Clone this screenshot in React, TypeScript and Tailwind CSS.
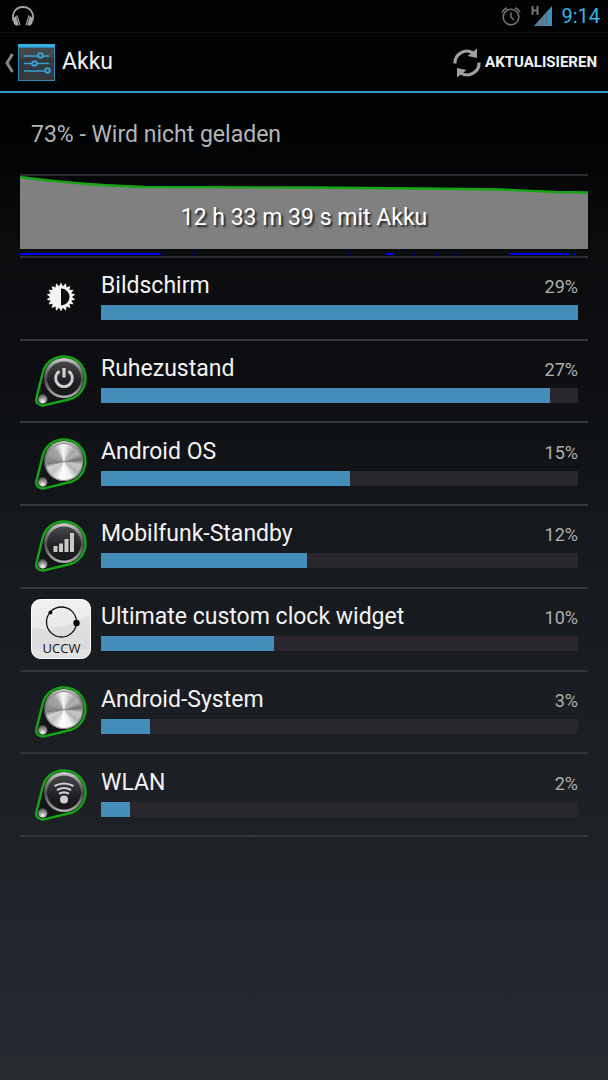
import { useId, type ReactNode } from 'react';

type IconName = 'display' | 'idle' | 'system' | 'cell' | 'uccw' | 'wifi';

interface Usage {
  name: string;
  percent: number;
  bar: number;
  icon: IconName;
}

const usages: Usage[] = [
  { name: 'Bildschirm', percent: 29, bar: 100, icon: 'display' },
  { name: 'Ruhezustand', percent: 27, bar: 94.2, icon: 'idle' },
  { name: 'Android OS', percent: 15, bar: 52.2, icon: 'system' },
  { name: 'Mobilfunk-Standby', percent: 12, bar: 43.1, icon: 'cell' },
  { name: 'Ultimate custom clock widget', percent: 10, bar: 36.2, icon: 'uccw' },
  { name: 'Android-System', percent: 3, bar: 10.2, icon: 'system' },
  { name: 'WLAN', percent: 2, bar: 6.1, icon: 'wifi' },
];

// [start, width] of the phases with the screen on
const screenOn = [
  [0, 140], [142, 1], [174, 1], [213, 1], [328, 1], [345, 1], [366, 8],
  [394, 1], [416, 1], [436, 1], [489, 60], [554, 1], [567, 1],
];

function HeadphonesIcon() {
  return (
    <svg width="24" height="22" viewBox="0 0 24 22" fill="none" aria-hidden="true">
      <path d="M2.500 16C.5 9 4 2 12 2s11.500 7 9.500 14" stroke="#a3a3a3" strokeWidth="1.800" />
      <path d="M3 12.500 6.500 10l3 10-4 .5C2.500 20 1.500 16 3 12.500ZM21 12.500 17.500 10l-3 10 4 .5c3-.5 4-4.500 2.500-8Z" fill="#a8a8a8" />
      <path d="m5.500 11.500 2.500 9M18.500 11.500l-2.500 9" stroke="#444" />
    </svg>
  );
}

function AlarmIcon() {
  return (
    <svg width="20" height="20" viewBox="0 0 20 20" fill="none" stroke="#757575" aria-hidden="true">
      <circle cx="10" cy="11" r="7.800" strokeWidth="1.600" />
      <path d="M10 6.500V11l2.800 3" strokeWidth="1.500" />
      <path d="M1 6.500Q2.500 3 6 1.700M19 6.500Q17.500 3 14 1.700" strokeWidth="1.500" />
    </svg>
  );
}

function SignalIcon() {
  return (
    <svg width="22" height="22" viewBox="0 0 22 22" aria-hidden="true">
      <path d="M1.500 1v9M6.500 1v9M2 5.500h4.500" stroke="#777" strokeWidth="2" />
      <path d="M21 1v20H3Z" fill="#3d8fc0" />
      <path d="M7.500 16.500V21M11.500 12v9M15.500 7.500V21" stroke="#6c6a6c" strokeWidth="1.500" />
    </svg>
  );
}

function SettingsIcon() {
  return (
    <svg width="37" height="37" viewBox="0 0 37 37" aria-hidden="true">
      <rect width="37" height="37" fill="#2f86b5" />
      <rect x="1" y="4" width="35" height="32" fill="#34393d" />
      <rect x="1" y="4" width="35" height="10" fill="#44474a" />
      <rect width="37" height="3" fill="#35aee0" />
      <g stroke="#3a9fd0" strokeWidth="1.500" fill="#34393d">
        <path d="M6 12h25M6 19.500h25M6 27h25" />
        <circle cx="22.500" cy="11.500" r="2.300" strokeWidth="2" />
        <circle cx="16.500" cy="19.500" r="2.300" strokeWidth="2" />
        <circle cx="29.500" cy="26.500" r="2.300" strokeWidth="2" />
      </g>
    </svg>
  );
}

function RefreshIcon() {
  return (
    <svg width="28" height="30" viewBox="0 0 28 30" aria-hidden="true">
      <g fill="none" stroke="#a0a0a0" strokeWidth="3.200">
        <path d="M1.900 15.500A12 12 0 0 1 20 4.800" />
        <path d="M26.100 14.500A12 12 0 0 1 8 25.200" />
      </g>
      <path d="M24 .5V10L14.500 8ZM4 29.500V20l9.500 2Z" fill="#a0a0a0" />
    </svg>
  );
}

function DisplayIcon() {
  const points = Array.from({ length: 36 }, (_, i) => {
    const angle = (i * Math.PI) / 18;
    const radius = i % 2 === 0 ? 14.5 : 11;
    return `${30 + radius * Math.sin(angle)},${29 - radius * Math.cos(angle)}`;
  }).join(' ');

  return (
    <svg width="60" height="60" viewBox="0 0 60 60" aria-hidden="true">
      <polygon points={points} fill="#f2f2f2" />
      <path d="M30 20.500a8.500 8.500 0 0 1 0 17Z" fill="#0b0c0e" />
    </svg>
  );
}

function UccwIcon() {
  const id = useId();
  return (
    <svg width="60" height="60" viewBox="0 0 60 60" aria-hidden="true">
      <defs>
        <linearGradient id={id} x1="0" y1="0" x2="0" y2="1">
          <stop offset="0" stopColor="#f0f0f0" />
          <stop offset="1" stopColor="#e0e0e0" />
        </linearGradient>
      </defs>
      <rect x=".5" y=".5" width="59" height="59" rx="9" fill={`url(#${id})`} stroke="#fff" />
      <path d="M1 29Q36 32 59 16V50H1Z" fill="#d3d3d3" opacity=".5" />
      <circle cx="30.500" cy="23" r="15" fill="none" stroke="#111" strokeWidth="1.300" />
      <circle cx="19.500" cy="13.500" r="2" />
      <circle cx="45.500" cy="24" r="3.200" />
      <text x="30.500" y="54" textAnchor="middle" fontSize="13" fill="#111" className="font-['Open_Sans',sans-serif]">
        UCCW
      </text>
    </svg>
  );
}

function KnobIcon({ metal, children }: { metal?: boolean; children?: ReactNode }) {
  const id = useId();
  return (
    <span className="relative block size-[60px]">
      <svg width="60" height="60" viewBox="0 0 60 60" aria-hidden="true">
        <defs>
          <linearGradient id={`${id}rim`} x1="0" y1="0" x2="0" y2="1">
            <stop offset="0" stopColor="#d0d0d0" />
            <stop offset=".3" stopColor="#777" />
            <stop offset=".55" stopColor="#4b4b4e" />
            <stop offset="1" stopColor="#b4b4b4" />
          </linearGradient>
          <linearGradient id={`${id}face`} x1="0" y1="0" x2="0" y2="1">
            <stop offset="0" stopColor="#47474a" />
            <stop offset=".55" stopColor="#222226" />
            <stop offset="1" stopColor="#151518" />
          </linearGradient>
          <radialGradient id={`${id}ball`} cx=".5" cy=".75" r=".7">
            <stop offset="0" stopColor="#fff" />
            <stop offset=".5" stopColor="#9d9d9d" />
            <stop offset="1" stopColor="#555" />
          </radialGradient>
        </defs>
        <path
          d="M11.500 22.500C14 12 22.500 5.500 33 5.500c12.500 0 21.500 10 21.500 21.500 0 10-6 18-15 21L13 54.300C8.500 55.300 4.500 52 5.300 47.500Z"
          fill="#141517"
          stroke="#16a516"
          strokeWidth="2.400"
        />
        <circle cx="33" cy="27" r="20" fill={`url(#${id}rim)`} />
        <circle cx="33" cy="27.500" r="17" fill={`url(#${id}face)`} />
        <circle cx="11.700" cy="48" r="4.700" fill={`url(#${id}ball)`} />
        {children}
      </svg>
      {metal && (
        <span className="absolute top-[9px] left-[14px] size-[38px] rounded-full border border-[#8a8a8a] bg-[conic-gradient(#f2f2f2_0deg,#d8d8d8_15deg,#a8a8a8_38deg,#b0b0b0_60deg,#707070_82deg,#c8c8c8_100deg,#b4b4b4_130deg,#f0f0f0_155deg,#fff_190deg,#c4c4c4_225deg,#d2d2d2_250deg,#7c7c7c_264deg,#9c9c9c_295deg,#a4a4a4_325deg,#f2f2f2_350deg)]" />
      )}
    </span>
  );
}

function UsageIcon({ name }: { name: IconName }) {
  switch (name) {
    case 'display':
      return <DisplayIcon />;
    case 'uccw':
      return <UccwIcon />;
    case 'system':
      return <KnobIcon metal />;
    case 'idle':
      return (
        <KnobIcon>
          <path d="M28.500 20.300a8.300 8.300 0 1 0 9 0" fill="none" stroke="#d0d0d0" strokeWidth="2.800" />
          <path d="M33 17v9.500" stroke="#d0d0d0" strokeWidth="3.200" />
        </KnobIcon>
      );
    case 'cell':
      return (
        <KnobIcon>
          <path d="M24.500 36v-6M30 36v-8.500M35.500 36V23M41 36V17" stroke="#c8c8c8" strokeWidth="4" />
        </KnobIcon>
      );
    case 'wifi':
      return (
        <KnobIcon>
          <g fill="none" stroke="#d0d0d0" strokeWidth="2.200">
            <path d="M23.500 21q9.500-5 19 0M26 25q7-4 14 0M28 28.800q5-3 10 0" />
          </g>
          <circle cx="33" cy="34.500" r="4" fill="#cfcfcf" />
        </KnobIcon>
      );
  }
}

function BatteryChart() {
  return (
    <button type="button" className="relative block h-[84px] w-full border-y-2 border-[#2a2c2f]">
      <svg className="block h-full w-full" viewBox="0 0 568 80" preserveAspectRatio="none" aria-hidden="true">
        <path d="M0 1Q60 9 124 11L290 11.500 400 12.500 480 13.500 535 16 568 16.500V73H0Z" fill="#808080" />
        <path d="M0 1Q60 9 124 11L290 11.500 400 12.500 480 13.500 535 16 568 16.500" fill="none" stroke="#16a516" strokeWidth="2.400" />
        {screenOn.map(([start, width]) => (
          <rect key={start} x={start} y="77" width={width} height="2" fill="#0000f5" />
        ))}
      </svg>
      <span className="absolute inset-0 flex items-center justify-center pt-1 text-[23px] text-white [text-shadow:2px_2px_2px_#222]">
        12 h 33 m 39 s mit Akku
      </span>
    </button>
  );
}

function UsageRow({ usage }: { usage: Usage }) {
  return (
    <li className="flex items-center gap-[10px] border-b-2 border-[#343639] pr-[10px] pl-[11px]">
      <UsageIcon name={usage.icon} />
      <div className="min-w-0 flex-1 pb-[6px]">
        <div className="flex items-baseline justify-between">
          <span className="text-[23px] leading-8 text-[#f3f3f3]">{usage.name}</span>
          <span className="text-[18px] leading-8 text-[#b0b0b0]">{usage.percent}%</span>
        </div>
        <div
          role="progressbar"
          aria-label={usage.name}
          aria-valuenow={usage.percent}
          className="mt-[2px] h-[15px] bg-[#29262d]"
        >
          <div className="h-full bg-[#448cb9]" style={{ width: `${usage.bar}%` }} />
        </div>
      </div>
    </li>
  );
}

export default function App() {
  return (
    <div className="min-h-screen bg-[linear-gradient(#010203_0%,#010203_12%,#0a0c0e_23%,#0c0e11_34%,#15181c_50%,#1b1f23_68%,#1e2125_79%,#20242b_83%,#23272f_92%,#282b30_100%)] font-[Roboto,sans-serif]">
      <div className="flex h-[33px] items-center justify-between border-b border-[#101112] pr-2 pl-[11px]">
        <HeadphonesIcon />
        <div className="flex items-center">
          <AlarmIcon />
          <span className="ml-[10px]">
            <SignalIcon />
          </span>
          <span className="ml-2 text-[20px] leading-8 text-[#33b5e5]">9:14</span>
        </div>
      </div>

      <header className="flex h-[60px] items-center justify-between border-b-2 border-[#319bc6] pt-px pr-[11px] pl-1">
        <button type="button" className="flex items-center">
          <svg width="10" height="20" viewBox="0 0 10 20" aria-hidden="true">
            <path d="M8.500 1 3 10l5.500 9" fill="none" stroke="#858585" strokeWidth="3" />
          </svg>
          <span className="ml-1">
            <SettingsIcon />
          </span>
          <h1 className="ml-[7px] text-[23px] text-[#f3f3f3]">Akku</h1>
        </button>
        <button type="button" className="flex items-center gap-1 text-[15px] font-bold text-[#f3f3f3]">
          <RefreshIcon />
          AKTUALISIEREN
        </button>
      </header>

      <main className="px-5">
        <p className="px-[11px] pt-[26px] pb-[23px] text-[23px] leading-8 text-[#b5b5b5]">73% - Wird nicht geladen</p>
        <BatteryChart />
        <ul className="grid min-h-[579px] auto-rows-fr">
          {usages.map((usage) => (
            <UsageRow key={usage.name} usage={usage} />
          ))}
        </ul>
      </main>
    </div>
  );
}
